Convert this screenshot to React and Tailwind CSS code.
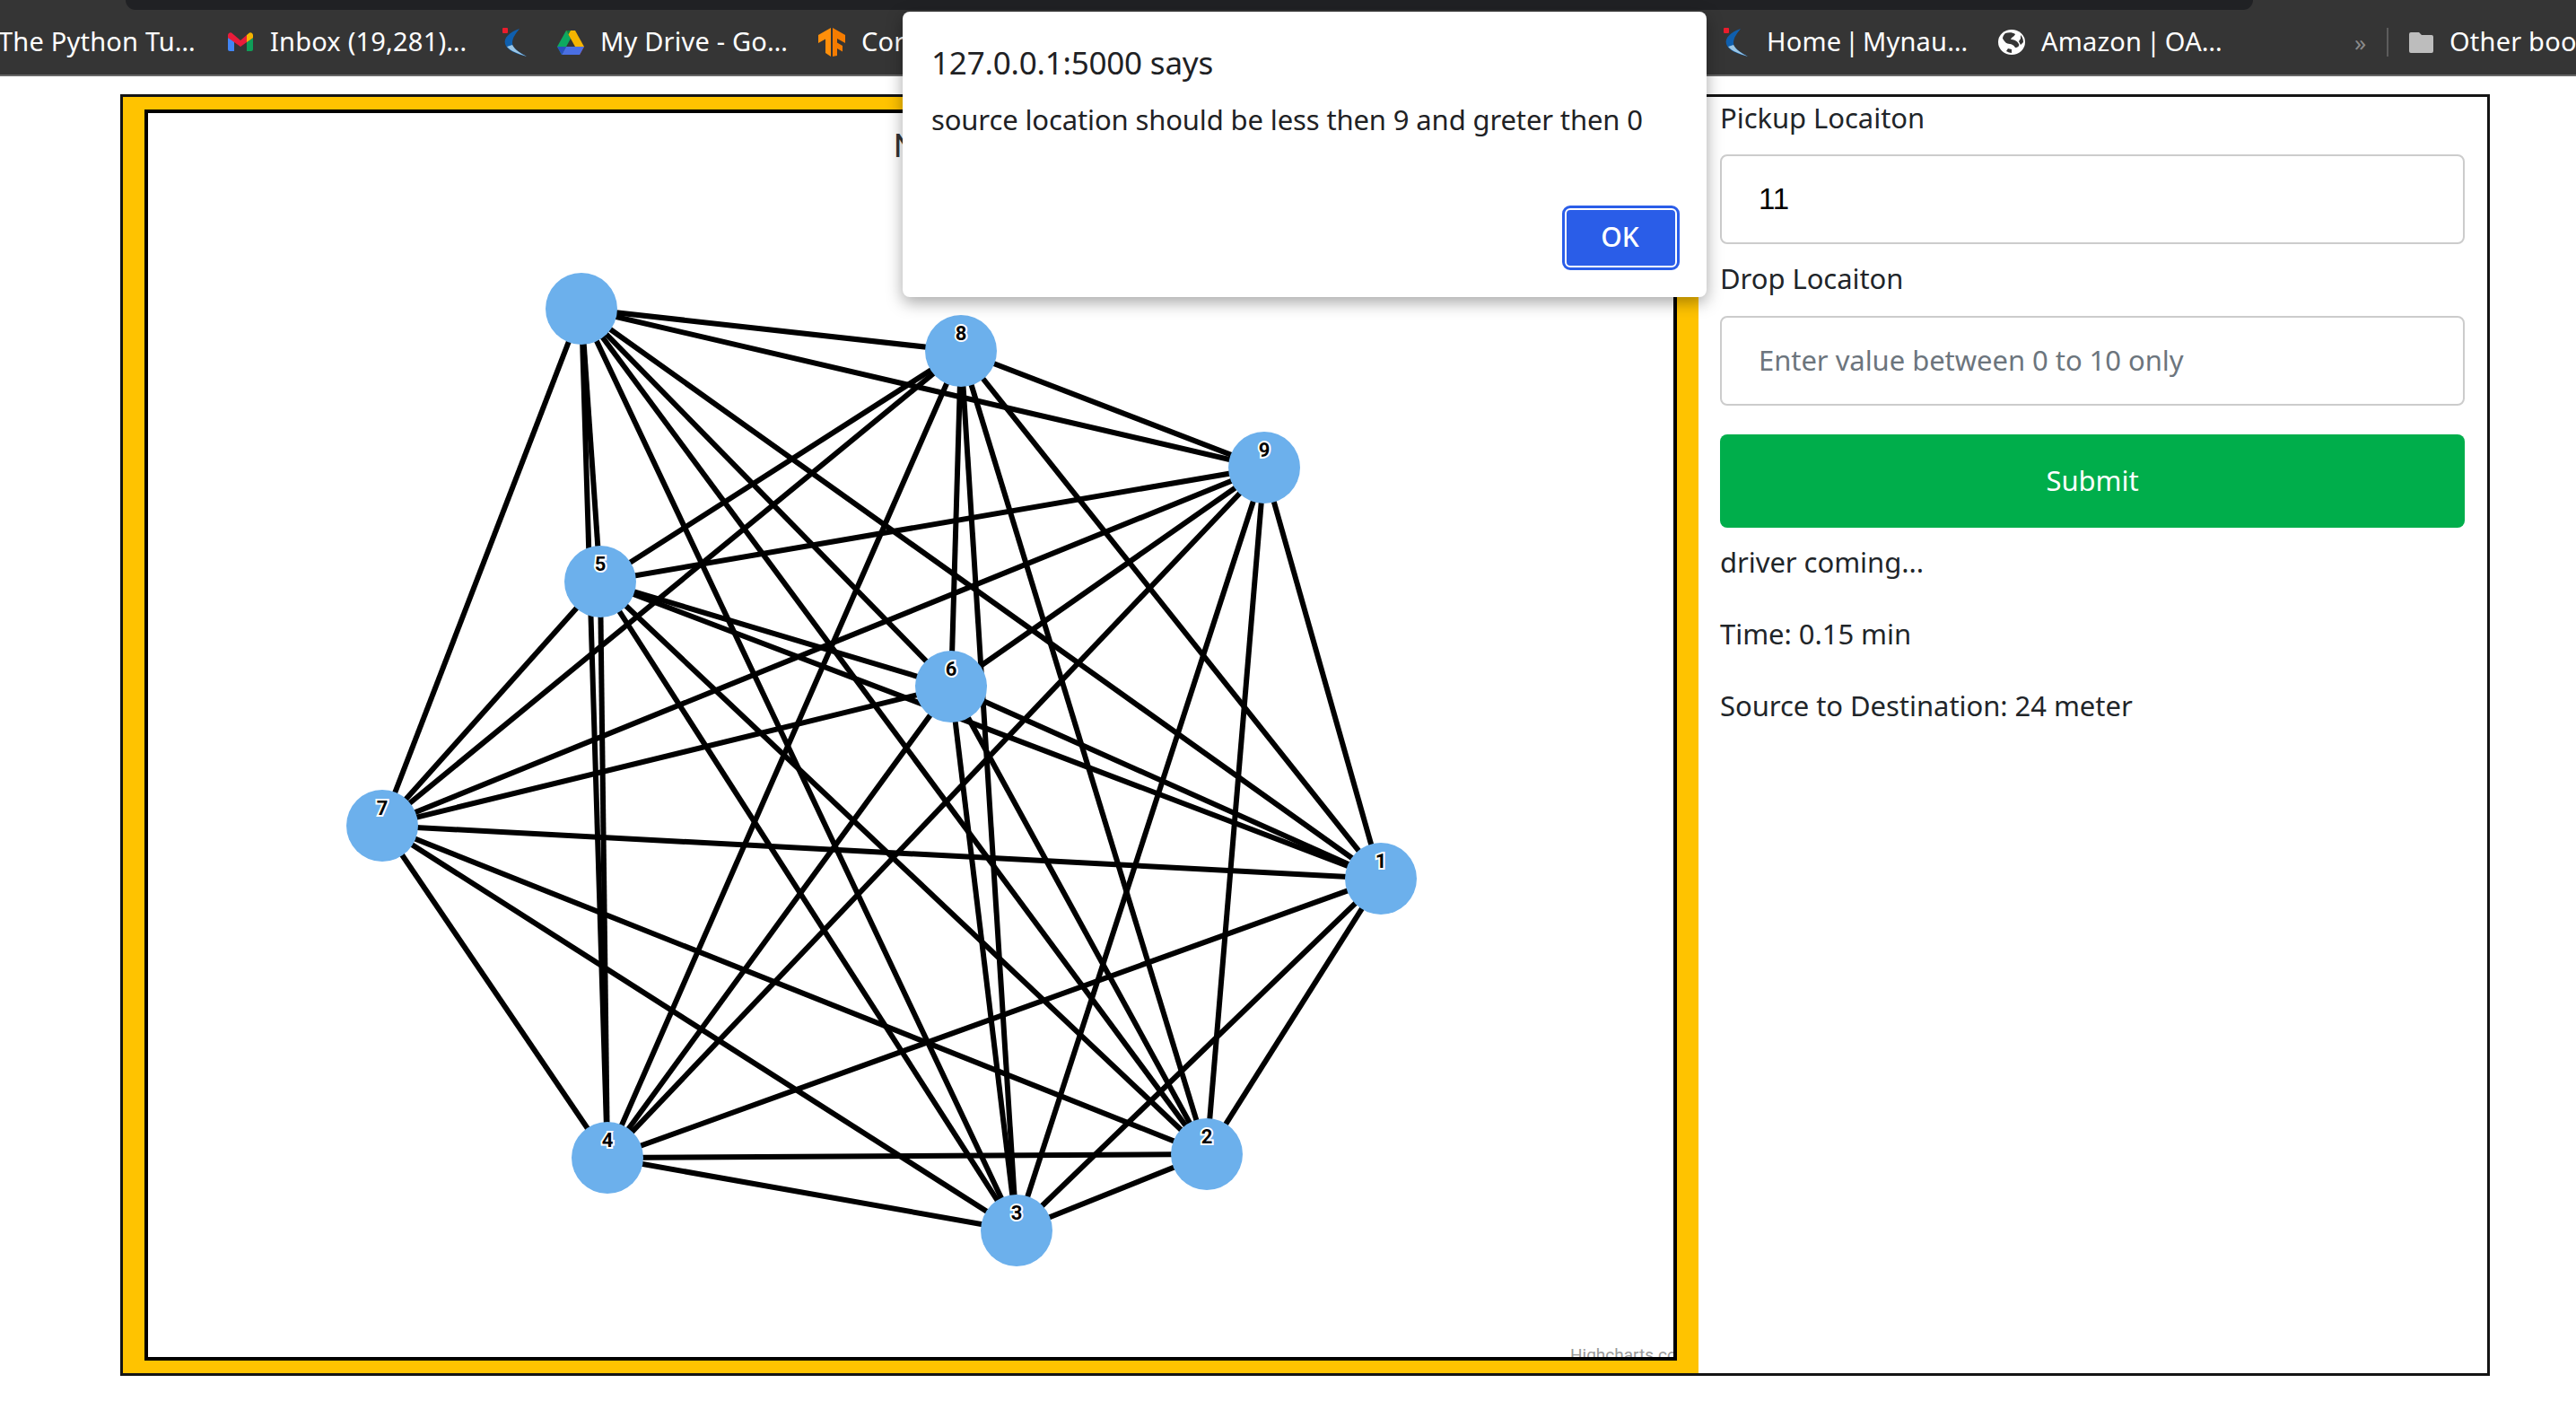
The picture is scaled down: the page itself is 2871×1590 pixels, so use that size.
import React from 'react';

const nodes = [
  { x: 648, y: 344 },
  { x: 1539, y: 979, label: '1' },
  { x: 1345, y: 1286, label: '2' },
  { x: 1133, y: 1371, label: '3' },
  { x: 677, y: 1290, label: '4' },
  { x: 669, y: 648, label: '5' },
  { x: 1060, y: 765, label: '6' },
  { x: 426, y: 920, label: '7' },
  { x: 1071, y: 391, label: '8' },
  { x: 1409, y: 521, label: '9' },
];

// every node is linked to every other one
const edges = [];
nodes.forEach((a, i) => {
  nodes.slice(i + 1).forEach((b) => edges.push([a, b]));
});

const GmailIcon = () => (
  <svg width="30" height="22" viewBox="0 0 30 22" className="shrink-0">
    <path d="M1 6v13a2 2 0 0 0 2 2h5V9z" fill="#4285f4" />
    <path d="M29 6v13a2 2 0 0 1-2 2h-5V9z" fill="#0f9d58" />
    <path d="M22 3l-7 6-7-6-3-2.500a3 3 0 0 0-4 2.500v3l14 10 14-10z" fill="#ea1c3a" />
    <path d="M22 3l3-2.500a3 3 0 0 1 4 2.500v3l-7 5z" fill="#f4b400" />
  </svg>
);

const KiteIcon = () => (
  <svg width="30" height="32" viewBox="0 0 30 32" className="shrink-0">
    <rect x="0" y="0" width="6" height="6" rx="1" fill="#ea1c2c" />
    <path d="M19 1C8 5 1 11 3 18c2 7 12 11 24 14-8-5-16-9-16-15 0-6 4-11 8-16z" fill="#0f5fae" />
    <path d="M5 21c4 5 13 8 22 11-7-4-13-7-16-13z" fill="#9cc6e4" />
  </svg>
);

const DriveIcon = () => (
  <svg width="30" height="27" viewBox="0 0 30 27" className="shrink-0">
    <path d="M10 0L0 18l5 9 10-18z" fill="#0da960" />
    <path d="M10 0h10l10 18H20z" fill="#f5b400" />
    <path d="M20 18l5 9 5-9z" fill="#ea2a2a" />
    <path d="M10 18h20l-5 9H5z" fill="#4a6fe3" />
    <path d="M0 18h10l-5 9z" fill="#2a4fc0" />
    <path d="M10 0h5l-2.500 4.500z" fill="#0b8043" />
  </svg>
);

const TensorIcon = () => (
  <svg width="30" height="32" viewBox="0 0 30 32" className="shrink-0">
    <path d="M14 0L0 8v9l8-4.500V28l6 4z" fill="#ff8f0a" />
    <path d="M16 0l14 8v9l-9-5v4.500l6 3.500v6.500l-6-3.500v8L16 32z" fill="#f57c00" />
  </svg>
);

const GlobeIcon = () => (
  <svg width="30" height="28" viewBox="0 0 30 28" className="shrink-0">
    <ellipse cx="15" cy="14" rx="15" ry="14" fill="#ffffff" />
    <path d="M8 4c4-1 8-1 11 1-1 3-4 3-5 6 3 0 7 1 9 5 1 2-1 4-4 4-2-3-4-4-6-4-4 0-6-3-8-6 0-2 1-4 3-6z" fill="#353535" />
    <path d="M25 6c2 2 3 5 3 8l-3 3-2-4 2-3z" fill="#353535" />
    <path d="M11 21l4 1v4c-2 0-4-1-6-2z" fill="#353535" />
  </svg>
);

const FolderIcon = () => (
  <svg width="27" height="23" viewBox="0 0 27 23" className="shrink-0">
    <path d="M2 0h9l3 3h11a2 2 0 0 1 2 2v16a2 2 0 0 1-2 2H2a2 2 0 0 1-2-2V2a2 2 0 0 1 2-2z" fill="#bdbdbd" />
  </svg>
);

const Bookmark = ({ icon, text, className }) => (
  <div className={`flex items-center shrink-0 gap-[18px] ${className}`}>
    {icon}
    <span className="whitespace-nowrap -mt-[2px]">{text}</span>
  </div>
);

const BookmarksBar = () => (
  <div className="relative h-[85px] bg-[#353535] border-b-2 border-[#666666] overflow-hidden flex items-center pt-[11px] text-white text-[29px] font-['Noto_Sans',sans-serif] tracking-[0.2px]">
    <div className="absolute top-0 left-[140px] w-[2371px] h-[11px] bg-[#202124] rounded-b-[14px]" />
    <div className="flex items-center w-[2871px] -ml-[2px]">
      <span className="w-[255px] shrink-0 whitespace-nowrap -mt-[2px]">The Python Tu…</span>
      <Bookmark icon={<GmailIcon />} text="Inbox (19,281)…" className="w-[307px]" />
      <Bookmark icon={<KiteIcon />} className="w-[61px]" />
      <Bookmark icon={<DriveIcon />} text="My Drive - Go…" className="w-[291px]" />
      <Bookmark icon={<TensorIcon />} text="Cor" className="w-[1009px]" />
      <Bookmark icon={<KiteIcon />} text="Home | Mynau…" className="w-[306px] [word-spacing:-4px]" />
      <Bookmark icon={<GlobeIcon />} text="Amazon | OA…" className="w-[397px] [word-spacing:-3px]" />
      <span className="w-[36px] shrink-0 text-[#8a8a8a] text-[26px]">»</span>
      <div className="w-[2px] h-[32px] bg-[#5c5c5c] shrink-0 mr-[23px]" />
      <Bookmark icon={<FolderIcon />} text="Other bookmarks" />
    </div>
  </div>
);

const NetworkChart = () => (
  <div className="relative flex-1 border-4 border-black bg-white overflow-hidden">
    <svg className="block w-full h-full" viewBox="165 126 1700 1386">
      {edges.map(([a, b], i) => (
        <line key={i} x1={a.x} y1={a.y} x2={b.x} y2={b.y} stroke="#000000" strokeWidth="6" />
      ))}
      {nodes.map((n, i) => (
        <circle key={i} cx={n.x} cy={n.y} r="40" fill="#6cb0ec" />
      ))}
      {nodes.filter((n) => n.label).map((n) => (
        <text
          key={n.label}
          x={n.x}
          y={n.y - 12}
          textAnchor="middle"
          fontFamily="Roboto, sans-serif"
          fontSize="22"
          fontWeight="700"
          fill="#000000"
          stroke="#ffffff"
          strokeWidth="4"
          paintOrder="stroke"
        >
          {n.label}
        </text>
      ))}
    </svg>
    <span className="absolute left-[831px] top-[19px] text-[36px] leading-none text-[#333333] font-['Roboto',sans-serif]">N</span>
    <span className="absolute left-[1585px] top-[1374px] text-[19px] leading-none text-[#999999] font-['Roboto',sans-serif] tracking-normal whitespace-nowrap">Highcharts.com</span>
  </div>
);

const LocationForm = () => (
  <div className="w-[879px] shrink-0 pl-[24px] pr-[25px] text-[31px] leading-[48px] text-[#212529]">
    <label className="block h-[65px] -mt-[1px]">Pickup Locaiton</label>
    <input
      readOnly
      value="11"
      className="block w-full h-[100px] px-[41px] border-2 border-[#cccccc] rounded-[8px] text-[33px] text-black font-['Liberation_Sans',sans-serif] bg-white outline-none"
    />
    <label className="block h-[80px] pt-[14px]">Drop Locaiton</label>
    <input
      readOnly
      placeholder="Enter value between 0 to 10 only"
      className="block w-full h-[100px] px-[41px] pb-[2px] border-2 border-[#cccccc] rounded-[8px] text-[31px] bg-white outline-none placeholder:text-[#6c757d]"
    />
    <button className="block w-full h-[104px] mt-[32px] pb-[2px] bg-[#00ae4b] text-white rounded-[8px]">Submit</button>
    <p className="mt-[14px] mb-[32px]">driver coming...</p>
    <p className="mb-[32px]">Time: 0.15 min</p>
    <p>Source to Destination: 24 meter</p>
  </div>
);

const AlertDialog = () => (
  <div className="absolute left-[1006px] top-[13px] w-[896px] h-[318px] bg-white rounded-[8px] shadow-[0_6px_18px_rgba(0,0,0,0.35)] flex flex-col px-[32px] pt-[33px] pb-[30px] text-[#202124]">
    <div className="text-[35px] leading-[48px] tracking-[-0.2px]">127.0.0.1:5000 says</div>
    <div className="text-[31px] leading-[48px] mt-[15px] tracking-[-0.13px]">source location should be less then 9 and greter then 0</div>
    <div className="mt-auto flex justify-end">
      <button className="w-[131px] h-[72px] -mr-[2px] pb-[3px] pr-[2px] bg-[#2a5de8] text-white text-[30px] font-medium rounded-[9px] border-[3px] border-[#2a5de8] outline-2 -outline-offset-[5px] outline-white">OK</button>
    </div>
  </div>
);

export default function App() {
  return (
    <div className="relative h-[1590px] w-[2871px] bg-white overflow-hidden font-['Noto_Sans',sans-serif] tracking-[-0.05px]">
      <BookmarksBar />
      <div className="flex h-[1428px] w-[2641px] ml-[134px] mt-[20px] border-[3px] border-[#141414]">
        <div className="flex w-[1756px] shrink-0 bg-[#ffc300] pl-[24px] pr-[24px] py-[14px]">
          <NetworkChart />
        </div>
        <LocationForm />
      </div>
      <AlertDialog />
    </div>
  );
}
